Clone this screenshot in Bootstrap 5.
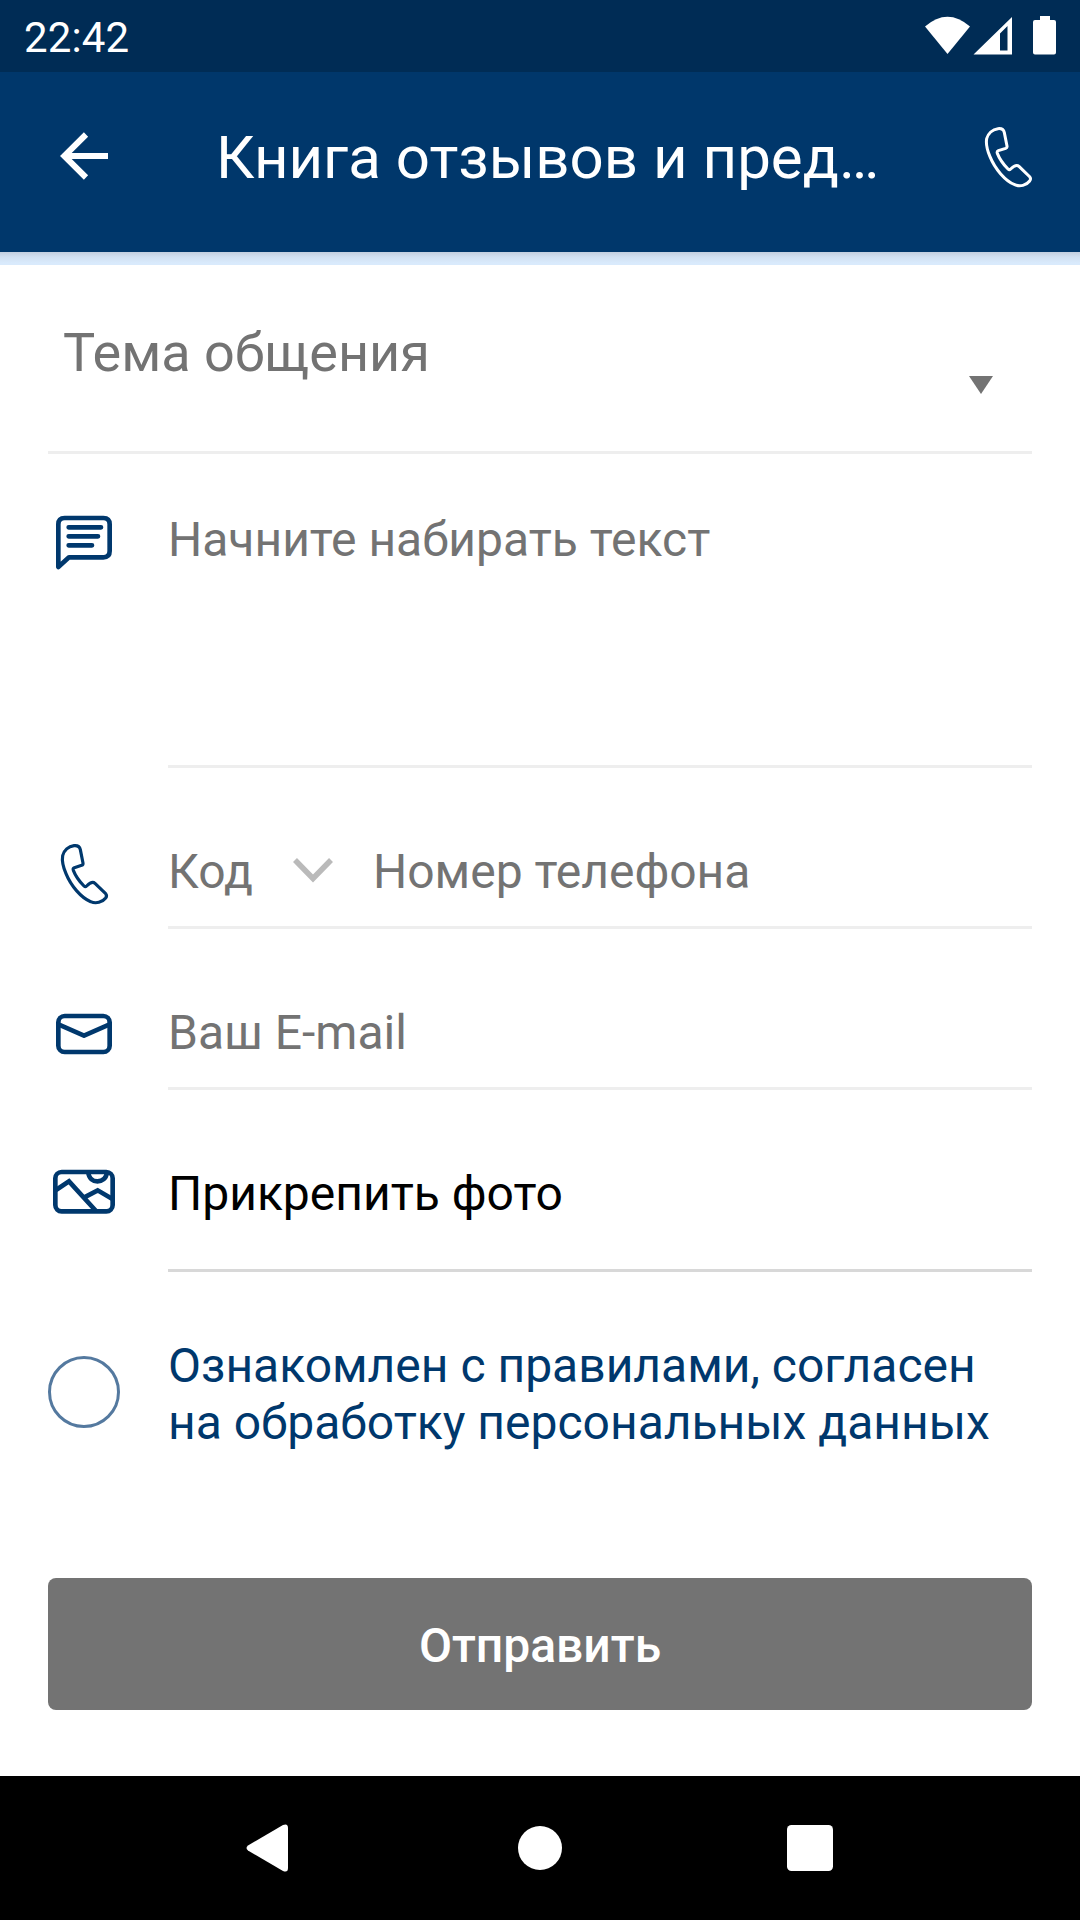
<!DOCTYPE html>
<html lang="ru">
<head>
<meta charset="utf-8">
<meta name="viewport" content="width=device-width, initial-scale=1">
<title>Книга отзывов и предложений</title>
<link rel="stylesheet" href="https://cdn.jsdelivr.net/npm/bootstrap@5.3.0/dist/css/bootstrap.min.css">
<style>
:root { --brand: #00386d; --hint: #737373; }
body { font-family: Roboto, "Noto Sans", sans-serif; font-size: 48px; line-height: 56px; color: #000; background: #fff; }
svg { display: block; flex: none; }
.screen { width: 1080px; height: 1920px; overflow: hidden; }
.status-bar { height: 72px; background: #002c55; font-size: 42px; line-height: 50px; padding: 12px 24px 0; }
.clock { padding-top: 1px; letter-spacing: .15px; }
.app-bar { height: 180px; background: #00376b; padding: 0 36px 0 60px; }
.app-title { width: 664px; margin: 51px 0 0 108px; font-size: 60px; line-height: 70px; }
.back-icon { margin-top: 60px; }
.call-icon { margin: 41px 0 0 auto; }
.accent-strip { height: 13px; background: linear-gradient(#c3cfdf, #d2e1f2 40%, #d9eafc 85%); }
.form-area { height: 1511px; padding: 0 48px; }
.line-b { border-bottom: 3px solid #eee; }
.line-strong { border-bottom-color: #d8d8d8; }
.topic-field { height: 189px; font-size: 54px; line-height: 64px; padding: 56px 39px 0 15px; color: var(--hint); }
.topic-caret { margin-top: 55px; }
.form-line { gap: 48px; height: 161px; }
.form-line.tall { height: 314px; }
.form-line.photo { height: 182px; }
.field { padding-top: 76px; color: var(--hint); white-space: nowrap; }
.tall .field { padding-top: 58px; }
.photo .field { color: #000; }
.ic { stroke: var(--brand); fill: none; stroke-width: 14; stroke-linecap: round; stroke-linejoin: round; }
.ic-note { margin-top: 46px; } .ic-phone { margin-top: 62px; stroke-width: 9.5; }
.ic-mail { margin-top: 71px; } .ic-photo { margin-top: 65px; }
.code-box { width: 205px; padding-right: 40px; }
.code-chevron { margin-top: 14px; }
.consent { gap: 48px; margin-top: 66px; color: var(--brand); line-height: 57px; white-space: nowrap; }
.consent-text { margin-top: -1px; }
.consent-check { width: 72px; height: 72px; margin-top: 18px; border: 3px solid #54799f; border-radius: 50%; flex: none; }
.send-btn { height: 132px; margin-top: 127px; padding: 4px 0 0; border: 0; border-radius: 8px; background: var(--hint); color: #fff; font-size: 48px; line-height: 56px; font-weight: 500; }
.nav-keys { height: 144px; background: #000; padding: 0 247px 0 246px; }
.home-key { margin-left: 5px; }
</style>
<script src="https://cdn.jsdelivr.net/npm/bootstrap@5.3.0/dist/js/bootstrap.bundle.min.js"></script>
</head>
<body>
<svg width="0" height="0" class="d-none">
  <symbol id="phone" viewBox="24 0 216 270">
    <path d="M102 47C112 46 119 49 121 59L129 99Q130 104 125 106L103 113Q98 115 100 121C107 139 120 156 132 168Q136 172 140 168C147 161 156 152 165 160L197 191Q202 197 197 204C187 217 168 222 152 215C124 204 93 168 78 131C70 112 65 94 68 77C72 62 85 49 102 47Z"/>
  </symbol>
</svg>
<div class="screen d-flex flex-column">
  <div class="status-bar d-flex justify-content-between text-white">
    <span class="clock">22:42</span>
    <svg width="132" height="44" viewBox="924 12 132 44" fill="#fff">
      <path d="M925 26.500Q947.500 7 970 26.500L947.500 54Z"/>
      <path fill-rule="evenodd" d="M973.500 54.500L1012 17V54.500ZM1000 33.500V50.500H1007.500V26Z"/>
      <path d="M1040 16h10v4h4q2 0 2 2v30.500q0 2-2 2h-19q-2 0-2-2V22q0-2 2-2h5z"/>
    </svg>
  </div>
  <header class="app-bar d-flex align-items-start text-white">
    <svg class="back-icon" width="48" height="48" viewBox="0 0 48 48" fill="none" stroke="#fff" stroke-width="6"><path d="M48 24H5M26 2.500L4.300 24L26 45.500"/></svg>
    <div class="app-title text-nowrap">Книга отзывов и пред…</div>
    <svg class="call-icon" width="72" height="90" fill="none" stroke="#fff" stroke-width="9"><use href="#phone"/></svg>
  </header>
  <div class="accent-strip"></div>
  <main class="form-area">
    <div class="topic-field line-b d-flex justify-content-between align-items-start">
      <span>Тема общения</span>
      <svg class="topic-caret" width="24" height="18"><path d="M0 0H24L12 18Z" fill="#737373"/></svg>
    </div>
    <div class="form-line tall d-flex align-items-start">
      <svg class="ic ic-note" width="72" height="80" viewBox="24 0 216 240"><path d="M55 201V73Q55 54 74 54H190Q209 54 209 73V153Q209 172 190 172H87ZM86 82H183M86 109H174M86 136H156"/></svg>
      <div class="field line-b flex-grow-1 h-100">Начните набирать текст</div>
    </div>
    <div class="form-line d-flex align-items-start">
      <svg class="ic ic-phone" width="72" height="90"><use href="#phone"/></svg>
      <div class="field line-b flex-grow-1 h-100 d-flex align-items-start">
        <div class="code-box d-flex justify-content-between align-items-start">
          <span>Код</span>
          <svg class="code-chevron" width="40" height="26" fill="none" stroke="#bababa" stroke-width="5.500"><path d="M2 2L20 20.500L38 2"/></svg>
        </div>
        <span>Номер телефона</span>
      </div>
    </div>
    <div class="form-line d-flex align-items-start">
      <svg class="ic ic-mail" width="72" height="70" viewBox="24 0 216 210"><rect x="55" y="48" width="154" height="108" rx="19"/><path d="M57 74L132 107L207 74"/></svg>
      <div class="field line-b flex-grow-1 h-100">Ваш E-mail</div>
    </div>
    <div class="form-line photo d-flex align-items-start">
      <svg class="ic ic-photo" width="72" height="70" viewBox="24 0 216 210"><rect x="46" y="51" width="172" height="118" rx="19"/><path stroke-linecap="butt" stroke-linejoin="miter" d="M48 105L87 79L168 168M133 127L173 106L216 131M145 53C148 88 196 88 201 53"/></svg>
      <div class="field line-b line-strong flex-grow-1 h-100">Прикрепить фото</div>
    </div>
    <div class="consent d-flex align-items-start">
      <span class="consent-check"></span>
      <div class="consent-text">Ознакомлен с правилами, согласен<br>на обработку персональных данных</div>
    </div>
    <button type="button" class="send-btn btn w-100 d-block">Отправить</button>
  </main>
  <nav class="nav-keys d-flex justify-content-between align-items-center">
    <svg width="42" height="48" fill="#fff"><path d="M2 21.500L37 1Q42-1 42 4V44Q42 49 37 47L2 26.500Q-1 24 2 21.500Z"/></svg>
    <svg class="home-key" width="44" height="44" fill="#fff"><circle cx="22" cy="22" r="22"/></svg>
    <svg width="46" height="46" fill="#fff"><rect width="46" height="46" rx="4.500"/></svg>
  </nav>
</div>
</body>
</html>
